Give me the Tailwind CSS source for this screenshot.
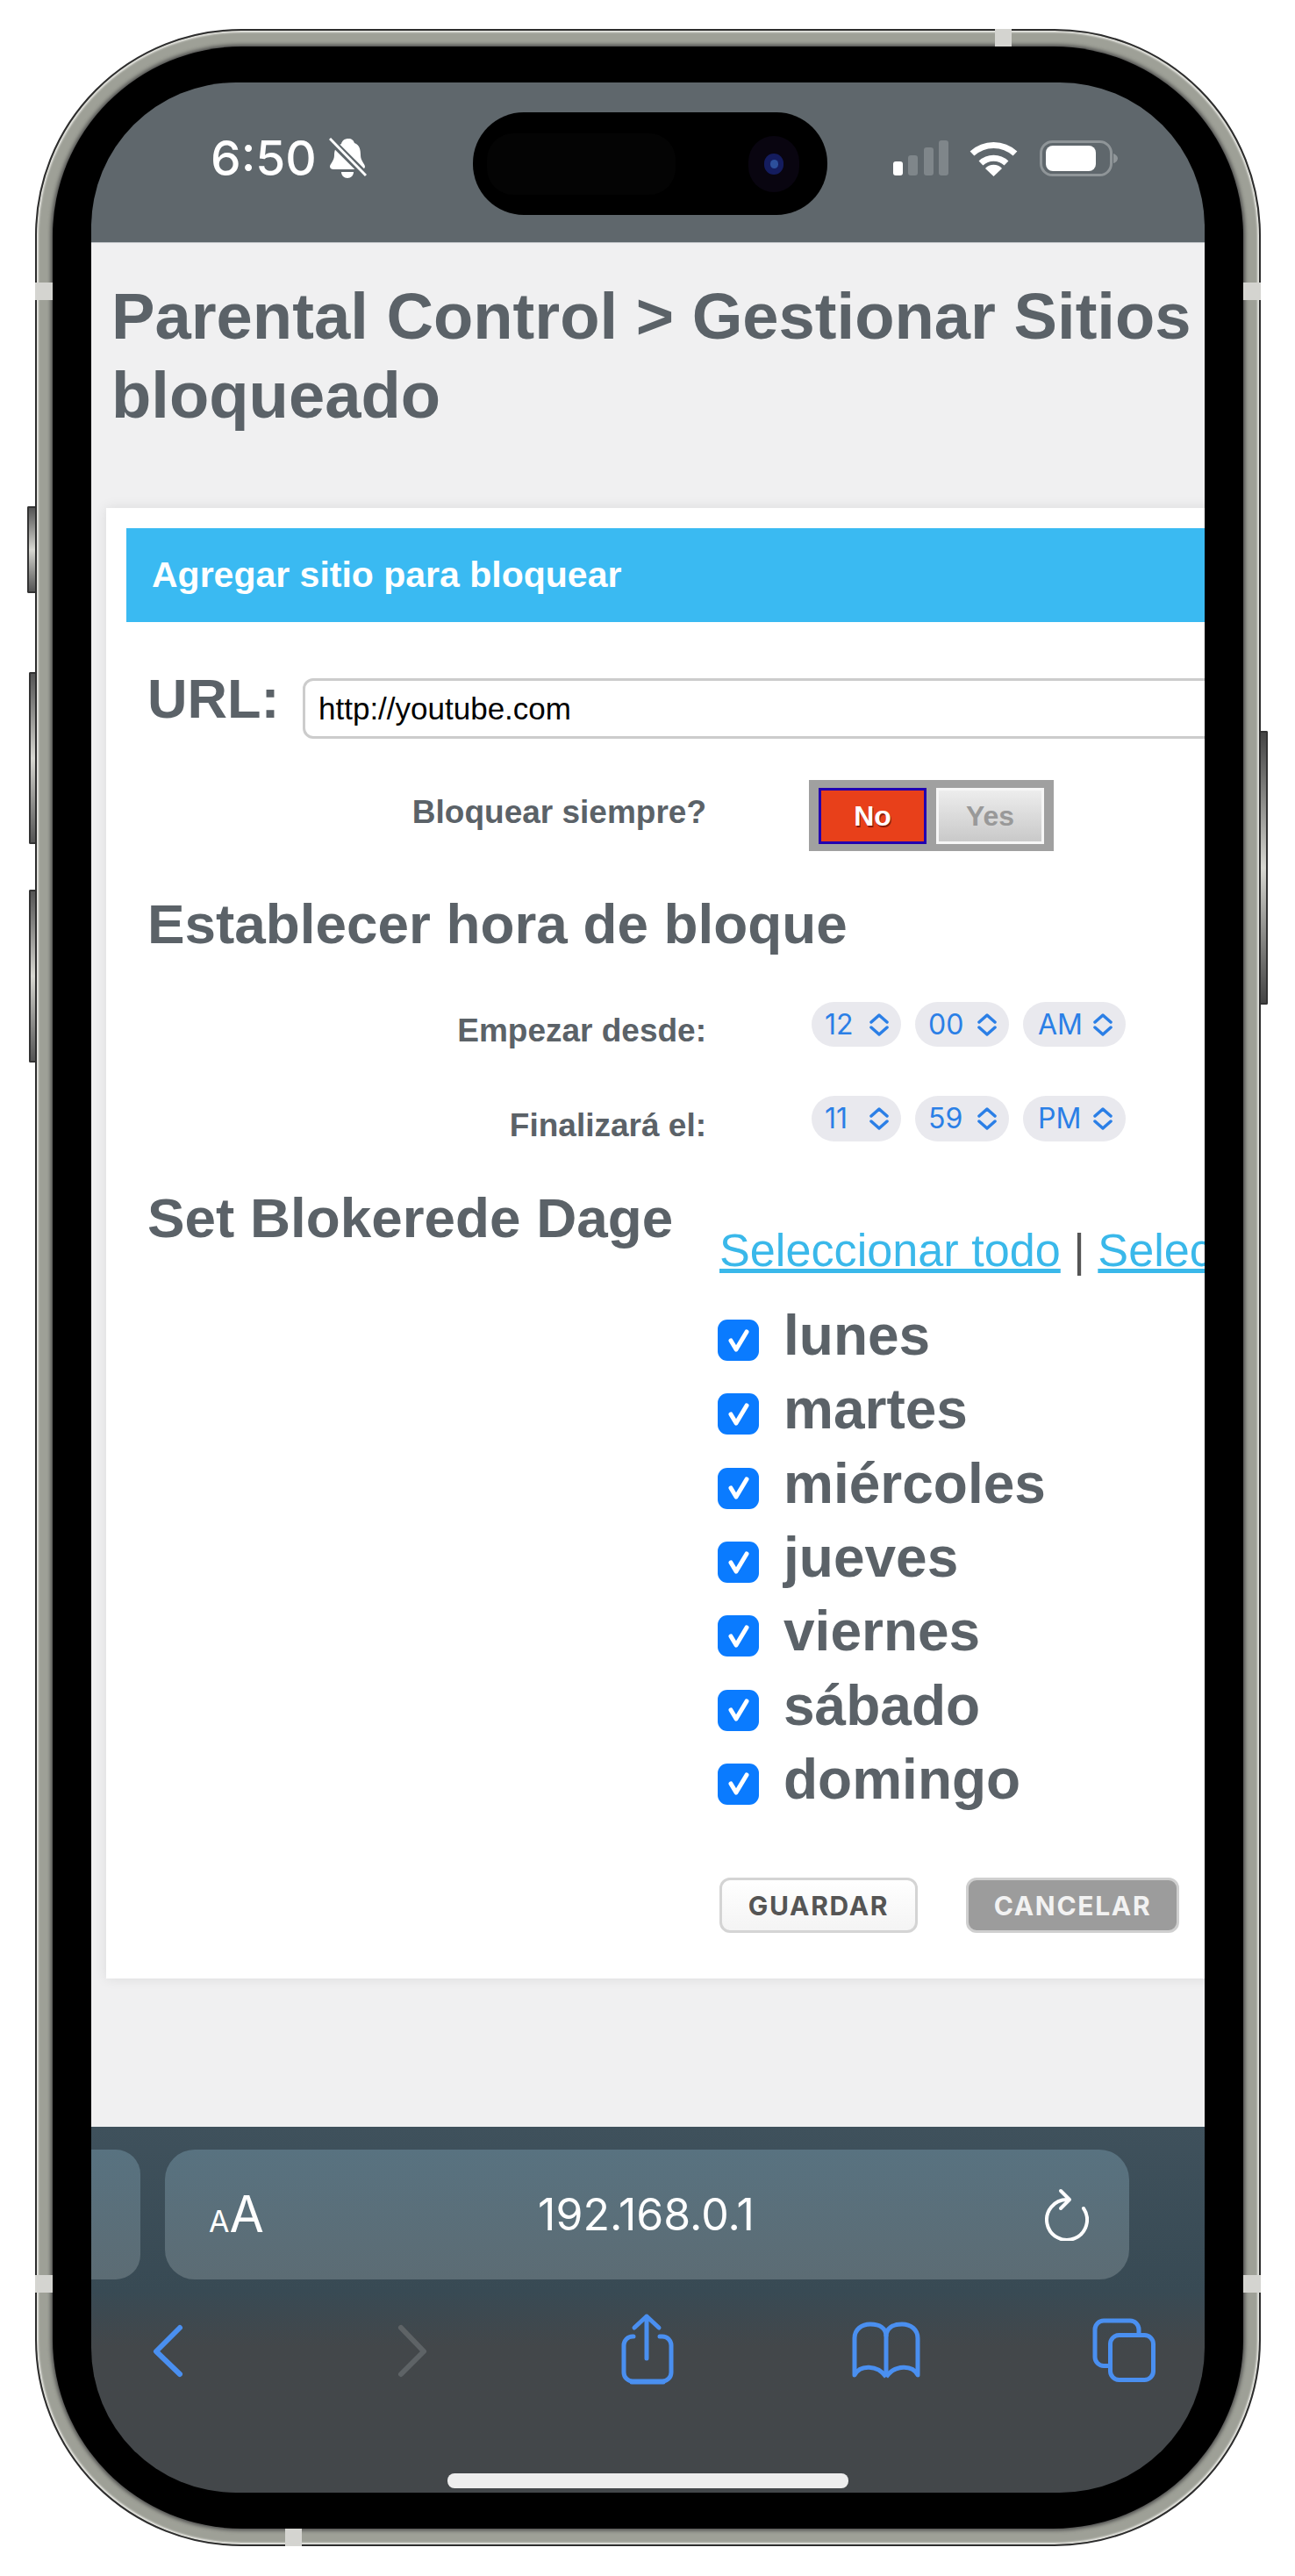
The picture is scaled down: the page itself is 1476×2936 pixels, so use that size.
<!DOCTYPE html>
<html lang="es">
<head>
    <meta charset="UTF-8">
    <meta name="viewport" content="width=device-width, initial-scale=1.0">
    <title>Parental Control</title>
    <script src="https://cdn.jsdelivr.net/npm/@tailwindcss/browser@4"></script>
</head>
<body class="bg-white font-['Liberation_Sans',Arial,sans-serif]">
    <div class="w-[1476px] h-[2936px] pt-[33px] pl-[40px] overflow-hidden">
        <!-- phone frame -->
        <div class="relative w-[1397px] h-[2869px] rounded-[235px] border-2 border-[#2d2d2d] bg-[#9ea097] p-[18px] shadow-[inset_0_0_2px_2px_#e6e6e1]">
            <!-- side buttons -->
            <div class="absolute left-[-11px] top-[542px] w-[9px] h-[99px] rounded-l-[2px] border-2 border-r-0 border-[#333] bg-gradient-to-b from-[#555] via-[#d8d8d2] to-[#555]"></div>
            <div class="absolute left-[-9px] top-[731px] w-[7px] h-[196px] rounded-l-[2px] border-2 border-r-0 border-[#333] bg-gradient-to-b from-[#555] via-[#d8d8d2] to-[#555]"></div>
            <div class="absolute left-[-9px] top-[979px] w-[7px] h-[197px] rounded-l-[2px] border-2 border-r-0 border-[#333] bg-gradient-to-b from-[#555] via-[#d8d8d2] to-[#555]"></div>
            <div class="absolute right-[-10px] top-[798px] w-[8px] h-[312px] rounded-r-[2px] border-2 border-l-0 border-[#333] bg-gradient-to-b from-[#444] via-[#d8d8d2] to-[#444]"></div>
            <!-- antenna bands -->
            <div class="absolute left-[1092px] top-[-2px] w-[19px] h-[20px] bg-[#d4d4d0]"></div>
            <div class="absolute left-[283px] bottom-[-2px] w-[19px] h-[20px] bg-[#d4d4d0]"></div>
            <div class="absolute left-[-2px] top-[287px] w-[20px] h-[20px] bg-[#d4d4d0]"></div>
            <div class="absolute right-[-2px] top-[287px] w-[20px] h-[20px] bg-[#d4d4d0]"></div>
            <div class="absolute left-[-2px] top-[2558px] w-[20px] h-[20px] bg-[#d4d4d0]"></div>
            <div class="absolute right-[-2px] top-[2558px] w-[20px] h-[20px] bg-[#d4d4d0]"></div>

            <div class="h-full rounded-[216px] bg-black pt-[41px] pb-[41px] pl-[44px] pr-[44px] shadow-[0_0_4px_2px_#4a4a4a]">
                <div class="relative h-full rounded-[165px] overflow-hidden flex flex-col">
                    <!-- status bar -->
                    <div class="relative h-[183px] shrink-0 bg-[#5f676c] pt-[63px] border-b border-[#c4c8cc]">
                        <div class="flex items-center h-[46px] pl-[136px] pr-[99px] text-white">
                            <span class="w-[118px] font-['Inter'] font-medium text-[55px] leading-[46px] whitespace-nowrap">6:50</span>
                            <svg class="ml-[17px]" width="43" height="46" viewBox="0 0 43 46" fill="#fff">
                                <path d="M22 1C26 1 28 3 29 6C35 8 36 14 36 20C36 26 41 30 41 33C41 35 39 36 37 36H5C3 36 1 35 1 33C1 30 6 26 6 20C6 14 8 9 14 7C15 3 18 1 22 1Z"/>
                                <path d="M14 39H28C28 43 25 46 21 46C17 46 14 43 14 39Z"/>
                                <path d="M-2 -1L44 45" stroke="#5f676c" stroke-width="8"/>
                                <path d="M1 1L42 43" stroke="#fff" stroke-width="3"/>
                            </svg>
                            <svg class="ml-auto" width="63" height="40" viewBox="0 0 63 40">
                                <rect x="0" y="24" width="11" height="16" rx="3" fill="#fff"/>
                                <rect x="17" y="17" width="11" height="23" rx="3" fill="#7f868a"/>
                                <rect x="35" y="8" width="11" height="32" rx="3" fill="#7f868a"/>
                                <rect x="52" y="0" width="11" height="40" rx="3" fill="#7f868a"/>
                            </svg>
                            <svg class="ml-[24px]" width="55" height="41" viewBox="0 0 55 41" fill="none" stroke="#fff" stroke-width="7">
                                <path d="M3 15A36 36 0 0 1 52 15"/>
                                <path d="M13 26A21 21 0 0 1 42 26"/>
                                <path d="M27.5 41L18 32A13 13 0 0 1 37 32Z" fill="#fff" stroke="none"/>
                            </svg>
                            <svg class="ml-[25px]" width="89" height="41" viewBox="0 0 89 41">
                                <rect x="1.5" y="1.5" width="80" height="38" rx="13" fill="none" stroke="#8f9598" stroke-width="3"/>
                                <rect x="7" y="6" width="57" height="29" rx="8" fill="#fff"/>
                                <path d="M84 15C87 16 89 18 89 20.5C89 23 87 25 84 26Z" fill="#8f9598"/>
                            </svg>
                        </div>
                        <!-- dynamic island -->
                        <div class="absolute left-[435px] top-[34px] w-[404px] h-[117px] rounded-[58px] bg-black flex items-center pl-[16px]">
                            <div class="w-[215px] h-[70px] rounded-[30px] bg-[#040404]"></div>
                            <div class="ml-[83px] w-[58px] h-[64px] rounded-full bg-[#090510] flex items-center justify-center">
                                <div class="w-[22px] h-[24px] rounded-full bg-[#141c5e] flex items-center justify-center">
                                    <div class="w-[9px] h-[10px] rounded-full bg-[#2c4f9c]"></div>
                                </div>
                            </div>
                        </div>
                    </div>

                    <!-- page -->
                    <div class="flex-1 bg-[#f0f0f1] overflow-hidden text-[#5b6268]">
                        <h1 class="pl-[23px] pt-[39px] font-bold text-[74.2px] leading-[90px]">Parental Control &gt; Gestionar Sitios<br>bloqueado</h1>
                        <div class="mt-[83px] ml-[17px] w-[1400px] h-[1676px] bg-white p-[23px] shadow-[0_0_14px_rgba(0,0,0,0.09)]">
                            <div class="h-[107px] bg-[#3abaf2] flex items-center pl-[29px] text-white font-bold text-[41px]">Agregar sitio para bloquear</div>

                            <div class="flex items-start mt-[64px] pl-[24px]">
                                <span class="w-[177px] font-bold text-[63px] leading-[47px]">URL:</span>
                                <input type="text" value="http://youtube.com" class="w-[1100px] h-[69px] pl-[15px] bg-white rounded-[12px] border-[3px] border-[#ccc] text-black text-[35px]">
                            </div>

                            <div class="flex items-start mt-[47px]">
                                <div class="w-[661px] text-right font-bold text-[37px] leading-[74px]">Bloquear siempre?</div>
                                <div class="ml-[117px] w-[279px] h-[81px] bg-[#a0a0a0] flex items-center pl-[11px] gap-[11px] font-bold text-[32px]">
                                    <div class="w-[123px] h-[64px] bg-[#e8401a] border-[3px] border-[#2200b0] flex items-center justify-center text-white [text-shadow:1px_2px_0_#8a1c08]">No</div>
                                    <div class="w-[123px] h-[64px] border-[3px] border-[#f6f6f6] bg-gradient-to-b from-[#ededed] to-[#c9c9c9] flex items-center justify-center text-[#999]">Yes</div>
                                </div>
                            </div>

                            <h2 class="mt-[43px] pl-[24px] font-bold text-[63.8px] leading-[80px]">Establecer hora de bloque</h2>

                            <div class="flex items-start mt-[49px]">
                                <div class="w-[661px] text-right font-bold text-[37px] leading-[66px]">Empezar desde:</div>
                                <div class="ml-[120px] flex gap-[16px] font-['Inter'] text-[32px] text-[#2b7fe6]">
                                    <div class="w-[102px] h-[51px] rounded-full bg-[#e9e9ee] flex items-center justify-between pl-[15px] pr-[14px]">12
                                        <svg width="22" height="26" viewBox="0 0 22 26" fill="none" stroke="#2b7fe6" stroke-width="3.5" stroke-linecap="round" stroke-linejoin="round"><path d="M2 10L11 2L20 10M2 16L11 24L20 16"/></svg>
                                    </div>
                                    <div class="w-[107px] h-[51px] rounded-full bg-[#e9e9ee] flex items-center justify-between pl-[15px] pr-[14px]">00
                                        <svg width="22" height="26" viewBox="0 0 22 26" fill="none" stroke="#2b7fe6" stroke-width="3.5" stroke-linecap="round" stroke-linejoin="round"><path d="M2 10L11 2L20 10M2 16L11 24L20 16"/></svg>
                                    </div>
                                    <div class="w-[117px] h-[51px] rounded-full bg-[#e9e9ee] flex items-center justify-between pl-[17px] pr-[15px]">AM
                                        <svg width="22" height="26" viewBox="0 0 22 26" fill="none" stroke="#2b7fe6" stroke-width="3.5" stroke-linecap="round" stroke-linejoin="round"><path d="M2 10L11 2L20 10M2 16L11 24L20 16"/></svg>
                                    </div>
                                </div>
                            </div>

                            <div class="flex items-start mt-[41px] h-[68px]">
                                <div class="w-[661px] text-right font-bold text-[37px] leading-[68px]">Finalizará el:</div>
                                <div class="ml-[120px] flex gap-[16px] font-['Inter'] text-[32px] text-[#2b7fe6]">
                                    <div class="w-[102px] h-[52px] rounded-full bg-[#e9e9ee] flex items-center justify-between pl-[15px] pr-[14px]">11
                                        <svg width="22" height="26" viewBox="0 0 22 26" fill="none" stroke="#2b7fe6" stroke-width="3.5" stroke-linecap="round" stroke-linejoin="round"><path d="M2 10L11 2L20 10M2 16L11 24L20 16"/></svg>
                                    </div>
                                    <div class="w-[107px] h-[52px] rounded-full bg-[#e9e9ee] flex items-center justify-between pl-[15px] pr-[14px]">59
                                        <svg width="22" height="26" viewBox="0 0 22 26" fill="none" stroke="#2b7fe6" stroke-width="3.5" stroke-linecap="round" stroke-linejoin="round"><path d="M2 10L11 2L20 10M2 16L11 24L20 16"/></svg>
                                    </div>
                                    <div class="w-[117px] h-[52px] rounded-full bg-[#e9e9ee] flex items-center justify-between pl-[17px] pr-[15px]">PM
                                        <svg width="22" height="26" viewBox="0 0 22 26" fill="none" stroke="#2b7fe6" stroke-width="3.5" stroke-linecap="round" stroke-linejoin="round"><path d="M2 10L11 2L20 10M2 16L11 24L20 16"/></svg>
                                    </div>
                                </div>
                            </div>

                            <div class="flex items-start mt-[31px] pl-[24px]">
                                <h2 class="w-[652px] shrink-0 font-bold text-[63.8px] leading-[80px]">Set Blokerede Dage</h2>
                                <div>
                                    <div class="pt-[47px] text-[52.2px] leading-[60px] whitespace-nowrap text-[#555]">
                                        <a href="#" class="underline text-[#3ab8ea]">Seleccionar todo</a> | <a href="#" class="underline text-[#3ab8ea]">Seleccionar ninguno</a>
                                    </div>
                                    <ul class="mt-[25px] -ml-[2px] font-bold text-[64px]">
                                        <li class="flex items-center h-[84.3px] gap-[28px]"><span class="mt-[11px] w-[47px] h-[47px] rounded-[11px] bg-[#0a7bff] flex items-center justify-center"><svg width="30" height="30" viewBox="0 0 30 30" fill="none" stroke="#fff" stroke-width="5" stroke-linecap="round" stroke-linejoin="round"><path d="M6 15L12 25L24 5"/></svg></span>lunes</li>
                                        <li class="flex items-center h-[84.3px] gap-[28px]"><span class="mt-[11px] w-[47px] h-[47px] rounded-[11px] bg-[#0a7bff] flex items-center justify-center"><svg width="30" height="30" viewBox="0 0 30 30" fill="none" stroke="#fff" stroke-width="5" stroke-linecap="round" stroke-linejoin="round"><path d="M6 15L12 25L24 5"/></svg></span>martes</li>
                                        <li class="flex items-center h-[84.3px] gap-[28px]"><span class="mt-[11px] w-[47px] h-[47px] rounded-[11px] bg-[#0a7bff] flex items-center justify-center"><svg width="30" height="30" viewBox="0 0 30 30" fill="none" stroke="#fff" stroke-width="5" stroke-linecap="round" stroke-linejoin="round"><path d="M6 15L12 25L24 5"/></svg></span>miércoles</li>
                                        <li class="flex items-center h-[84.3px] gap-[28px]"><span class="mt-[11px] w-[47px] h-[47px] rounded-[11px] bg-[#0a7bff] flex items-center justify-center"><svg width="30" height="30" viewBox="0 0 30 30" fill="none" stroke="#fff" stroke-width="5" stroke-linecap="round" stroke-linejoin="round"><path d="M6 15L12 25L24 5"/></svg></span>jueves</li>
                                        <li class="flex items-center h-[84.3px] gap-[28px]"><span class="mt-[11px] w-[47px] h-[47px] rounded-[11px] bg-[#0a7bff] flex items-center justify-center"><svg width="30" height="30" viewBox="0 0 30 30" fill="none" stroke="#fff" stroke-width="5" stroke-linecap="round" stroke-linejoin="round"><path d="M6 15L12 25L24 5"/></svg></span>viernes</li>
                                        <li class="flex items-center h-[84.3px] gap-[28px]"><span class="mt-[11px] w-[47px] h-[47px] rounded-[11px] bg-[#0a7bff] flex items-center justify-center"><svg width="30" height="30" viewBox="0 0 30 30" fill="none" stroke="#fff" stroke-width="5" stroke-linecap="round" stroke-linejoin="round"><path d="M6 15L12 25L24 5"/></svg></span>sábado</li>
                                        <li class="flex items-center h-[84.3px] gap-[28px]"><span class="mt-[11px] w-[47px] h-[47px] rounded-[11px] bg-[#0a7bff] flex items-center justify-center"><svg width="30" height="30" viewBox="0 0 30 30" fill="none" stroke="#fff" stroke-width="5" stroke-linecap="round" stroke-linejoin="round"><path d="M6 15L12 25L24 5"/></svg></span>domingo</li>
                                    </ul>
                                    <div class="flex gap-[55px] mt-[70px] font-['Inter'] font-bold text-[30px] tracking-[1.7px]">
                                        <button class="w-[226px] h-[63px] pt-[2px] rounded-[12px] border-[3px] border-[#d4d4d4] bg-gradient-to-b from-white to-[#f4f4f4] text-[#555]">GUARDAR</button>
                                        <button class="w-[243px] h-[63px] pt-[2px] rounded-[12px] border-[3px] border-[#cfcfcf] bg-[#9c9c9c] text-[#f2f2f2]">CANCELAR</button>
                                    </div>
                                </div>
                            </div>
                        </div>
                    </div>

                    <!-- safari toolbar -->
                    <div class="relative h-[417px] shrink-0 bg-gradient-to-b from-[#3f515c] via-[#384a54] via-45% to-[#43474a] to-60%">
                        <div class="flex h-[148px] mt-[26px] gap-[28px]">
                            <div class="w-[56px] rounded-r-[28px] bg-gradient-to-b from-[#587280] to-[#5c6c74]"></div>
                            <div class="w-[1099px] rounded-[34px] bg-gradient-to-b from-[#587280] to-[#5c6c74] flex items-center pl-[50px] pr-[46px] text-white font-['Inter']">
                                <span class="w-[66px] flex items-baseline whitespace-nowrap"><span class="text-[34px]">A</span><span class="text-[57px]">A</span></span>
                                <span class="flex-1 text-center pr-[22px] text-[50px]">192.168.0.1</span>
                                <svg width="50" height="60" viewBox="0 0 50 60" fill="none" stroke="#fff" stroke-width="4" stroke-linecap="round" stroke-linejoin="round"><path d="M25 13A23 23 0 1 0 44 23"/><path d="M18 3L28 13L18 23"/></svg>
                            </div>
                        </div>
                        <div class="flex mt-[37px] pl-[66px]">
                            <svg width="44" height="90" viewBox="0 0 44 90" fill="none" stroke="#4a8ff0" stroke-width="6" stroke-linecap="round" stroke-linejoin="round"><path d="M35 18L8 45L35 71"/></svg>
                            <svg class="ml-[234px]" width="44" height="90" viewBox="0 0 44 90" fill="none" stroke="#5e6366" stroke-width="6" stroke-linecap="round" stroke-linejoin="round"><path d="M9 18L35 45L9 71"/></svg>
                            <svg class="ml-[208px]" width="76" height="90" viewBox="0 0 76 90" fill="none" stroke="#4a8ff0" stroke-width="5" stroke-linecap="round" stroke-linejoin="round"><path d="M22 28H21A10 10 0 0 0 11 38V69A10 10 0 0 0 21 79H55A10 10 0 0 0 65 69V38A10 10 0 0 0 55 28H52"/><path d="M20 80H56"/><path d="M37 5V53M23 18L37 5L51 18"/></svg>
                            <svg class="ml-[190px]" width="90" height="90" viewBox="0 0 90 90" fill="none" stroke="#4a8ff0" stroke-width="5" stroke-linejoin="round"><path d="M44 28C44 18 36 14 26 14C16 14 8 20 8 30V72C14 60 34 60 44 74"/><path d="M44 28C44 18 52 14 62 14C72 14 80 20 80 30V72C74 60 54 60 44 74"/><path d="M44 28V74"/></svg>
                            <svg class="ml-[184px]" width="84" height="90" viewBox="0 0 84 90" fill="none" stroke="#4a8ff0" stroke-width="5"><path d="M24 61.5H18A10 10 0 0 1 8 51.5V20A10 10 0 0 1 18 10H48A10 10 0 0 1 58 20V26"/><rect x="25.5" y="26.5" width="49" height="51" rx="10"/></svg>
                        </div>
                        <div class="absolute left-[406px] top-[395px] w-[457px] h-[17px] rounded-[8px] bg-[#eeeeee]"></div>
                    </div>
                </div>
            </div>
        </div>
    </div>
</body>
</html>
